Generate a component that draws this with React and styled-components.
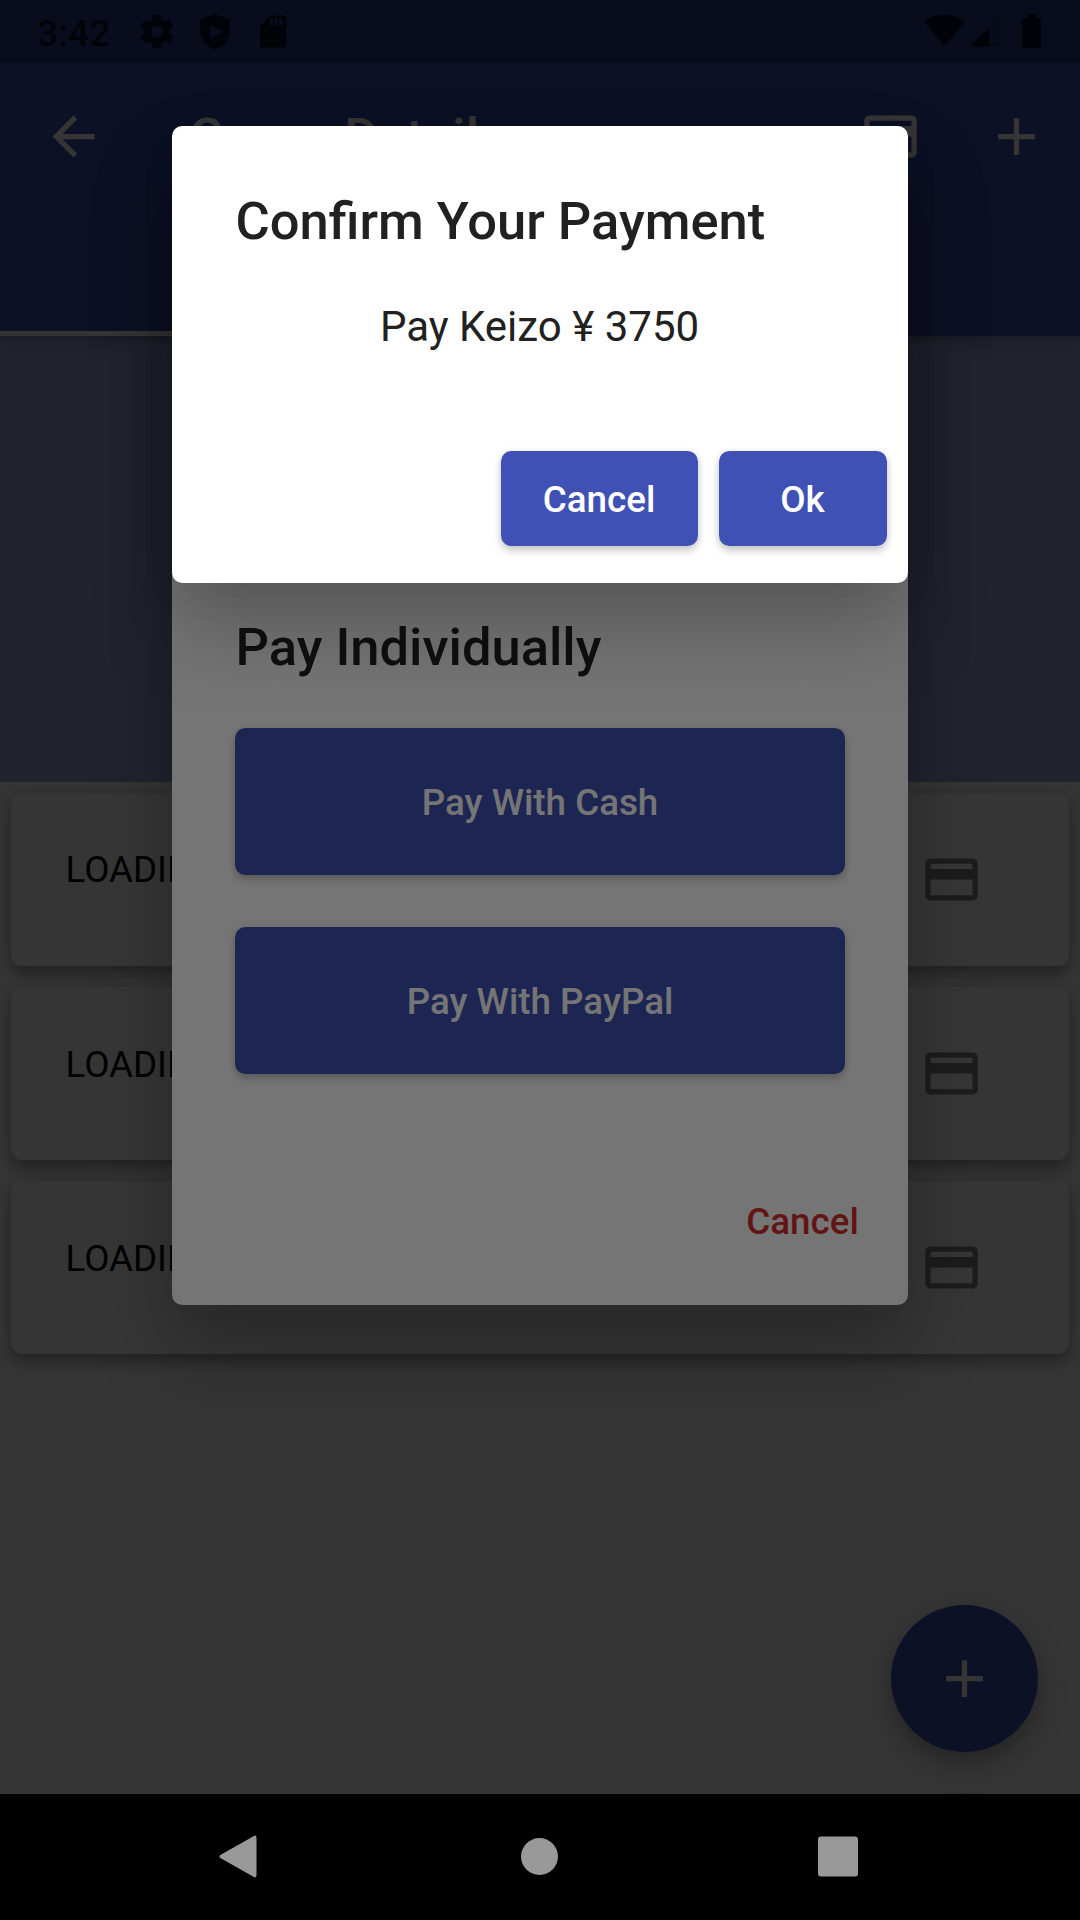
import React from "react";
import styled, { createGlobalStyle, css } from "styled-components";

const Global = createGlobalStyle`
  *, *::before, *::after { box-sizing: border-box; }
  body { margin: 0; background: #000; }
  button { font: inherit; border: 0; margin: 0; padding: 0; background: none; color: inherit; }
`;

const Device = styled.div`
  width: 1080px;
  height: 1920px;
  display: flex;
  flex-direction: column;
  overflow: hidden;
  font-family: Roboto, "Noto Sans", sans-serif;
  background: #000;
`;

const Screen = styled.div`
  position: relative;
  flex: 1;
  display: flex;
  flex-direction: column;
  overflow: hidden;
  background: #fafafa;
`;

const Header = styled.header`
  position: relative;
  z-index: 1;
  height: 336px;
  flex: none;
  display: flex;
  flex-direction: column;
  background: #3f51b5;
  box-shadow: 0 5px 12px rgba(0, 0, 0, 0.16), 0 8px 14px rgba(0, 0, 0, 0.06);
`;

const StatusBar = styled.div`
  height: 63px;
  display: flex;
  align-items: center;
  background: rgba(0, 0, 0, 0.25);
  color: rgba(0, 0, 0, 0.7);
`;

const Clock = styled.span`
  width: 141px;
  padding: 3px 0 0 37px;
  font-size: 37.3px;
  font-weight: 500;
  line-height: 44px;
  white-space: nowrap;
`;

const StatusIcons = styled.svg`
  display: block;
  margin-left: ${(p) => (p.$end ? "auto" : 0)};
`;

const Toolbar = styled.div`
  height: 147px;
  display: flex;
  align-items: center;
  padding-right: 0.5px;
  color: #fff;
`;

const IconButton = styled.button`
  width: ${(p) => p.$width || 126}px;
  height: 126px;
  flex: none;
  display: flex;
  align-items: center;
  justify-content: center;
  color: ${(p) => p.$color || "#fff"};
`;

const Icon = styled.svg`
  width: 63px;
  height: 63px;
  display: block;
  fill: currentColor;
`;

const ToolbarTitle = styled.h1`
  flex: 1;
  margin: 0;
  padding: 1px 0 0 42px;
  font-size: 52.5px;
  font-weight: 500;
  line-height: 62px;
`;

const Tabs = styled.div`
  flex: 1;
  display: flex;
`;

const Tab = styled.div`
  flex: 1;
  border-bottom: 5.25px solid ${(p) => (p.$active ? "#fff" : "transparent")};
`;

const Banner = styled.section`
  height: 446px;
  flex: none;
  background: #9fa8da;
`;

const List = styled.section`
  display: flex;
  flex-direction: column;
  gap: 21px;
  padding: 10.5px 11px;
`;

const Card = styled.article`
  height: 173.25px;
  display: flex;
  align-items: center;
  justify-content: space-between;
  padding: 0 55px 0 54.5px;
  border-radius: 10.5px;
  background: #fff;
  color: #000;
  box-shadow: 0 8px 14px rgba(0, 0, 0, 0.26), 0 3px 20px rgba(0, 0, 0, 0.16);
`;

const CardText = styled.span`
  margin-bottom: 18.5px;
  font-size: 36.75px;
  line-height: 43px;
`;

const Fab = styled.button`
  position: absolute;
  right: 42px;
  bottom: 42px;
  width: 147px;
  height: 147px;
  display: flex;
  align-items: center;
  justify-content: center;
  border-radius: 50%;
  background: #3f51b5;
  color: #fff;
  box-shadow: 0 10px 18px -2px rgba(0, 0, 0, 0.16), 0 14px 32px rgba(0, 0, 0, 0.14),
    0 3px 40px rgba(0, 0, 0, 0.06);
`;

const Scrim = styled.div`
  position: absolute;
  z-index: 2;
  inset: 0;
  display: flex;
  align-items: flex-start;
  justify-content: center;
  padding-top: 126px;
  background: rgba(0, 0, 0, 0.54);
`;

const Dialog = styled.div`
  width: 736px;
  height: ${(p) => p.$height}px;
  display: flex;
  flex-direction: column;
  border-radius: 10.5px;
  background: #fff;
  color: #212121;
  box-shadow: 0 46px 84px rgba(0, 0, 0, 0.24), 0 14px 40px rgba(0, 0, 0, 0.04);
`;

const DialogTitle = styled.h2`
  margin: 0;
  padding: ${(p) => p.$top}px 63.5px 0;
  font-size: 52.5px;
  font-weight: 500;
  line-height: 62px;
  white-space: nowrap;
`;

const DialogText = styled.p`
  margin: 0;
  padding: 50px 1px 0 0;
  font-size: 42px;
  line-height: 50px;
  text-align: center;
`;

const raised = css`
  border-radius: 10.5px;
  background: #3f51b5;
  color: #fff;
  box-shadow: 0 5px 8px rgba(0, 0, 0, 0.18), 0 1px 7px rgba(0, 0, 0, 0.1);
`;

const Button = styled.button`
  height: ${(p) => p.$height || 94.5}px;
  width: ${(p) => p.$width}px;
  flex: none;
  display: flex;
  align-items: center;
  justify-content: center;
  padding-top: 2px;
  font-size: 36.75px;
  font-weight: 500;
  line-height: 43px;
  ${(p) => (p.$flat ? "color: #d32f2f;" : raised)}
`;

const Choices = styled.div`
  display: flex;
  flex-direction: column;
  gap: 52px;
  padding: 50px 63px 0;
`;

const Actions = styled.div`
  display: flex;
  justify-content: flex-end;
  gap: 21px;
  margin-top: auto;
  padding: 0 21.5px ${(p) => p.$bottom}px;
`;

const NavBar = styled.nav`
  height: 126px;
  flex: none;
  display: flex;
  align-items: center;
  justify-content: center;
  gap: 236px;
  background: #000;
  fill: #999;
`;

const NavIcon = styled.svg`
  width: 63px;
  height: 63px;
  display: block;
`;

const AddIcon = () => (
  <Icon viewBox="0 0 24 24">
    <path d="M19 13h-6v6h-2v-6H5v-2h6V5h2v6h6v2z" />
  </Icon>
);

const CardIcon = () => (
  <Icon viewBox="0 0 24 24">
    <path d="M20 4H4c-1.11 0-1.99.89-1.99 2L2 18c0 1.11.89 2 2 2h16c1.11 0 2-.89 2-2V6c0-1.11-.89-2-2-2zm0 14H4v-6h16v6zm0-10H4V6h16v2z" />
  </Icon>
);

const BackIcon = () => (
  <Icon viewBox="0 0 24 24">
    <path d="M20 11H7.83l5.59-5.59L12 4l-8 8 8 8 1.41-1.41L7.83 13H20v-2z" />
  </Icon>
);

const GEAR =
  "M19.43 12.98c.04-.32.07-.64.07-.98s-.03-.66-.07-.98l2.11-1.65c.19-.15.24-.42.12-.64l-2-3.46c-.12-.22-.39-.3-.61-.22l-2.49 1c-.52-.4-1.08-.73-1.69-.98l-.38-2.65C14.46 2.18 14.25 2 14 2h-4c-.25 0-.46.18-.49.42l-.38 2.65c-.61.25-1.17.59-1.69.98l-2.49-1c-.23-.09-.49 0-.61.22l-2 3.46c-.13.22-.07.49.12.64l2.11 1.65c-.04.32-.07.65-.07.98s.03.66.07.98l-2.11 1.65c-.19.15-.24.42-.12.64l2 3.46c.12.22.39.3.61.22l2.49-1c.52.4 1.08.73 1.69.98l.38 2.65c.03.24.24.42.49.42h4c.25 0 .46-.18.49-.42l.38-2.65c.61-.25 1.17-.59 1.69-.98l2.49 1c.23.09.49 0 .61-.22l2-3.46c.12-.22.07-.49-.12-.64l-2.11-1.65zM12 15.5c-1.93 0-3.5-1.57-3.5-3.5s1.57-3.5 3.5-3.5 3.5 1.57 3.5 3.5-1.57 3.5-3.5 3.5z";

const LeftStatusIcons = () => (
  <StatusIcons width="150" height="63" fill="currentColor">
    <path transform="translate(-3.9 11.6) scale(1.66)" d={GEAR} />
    <path
      fillRule="evenodd"
      d="M74 14L88.8 19.6V31C88.8 40 82.5 47 74 49.2C65.500 47 59.200 40 59.200 31V19.600ZM69 24.800V38.400L82.700 31.600Z"
    />
    <path
      fillRule="evenodd"
      d="M129.500 15.500H142.500A3 3 0 0 1 145.500 18.500V44.800A3 3 0 0 1 142.500 47.800H122A3 3 0 0 1 119 44.800V26.200ZM129 18.500V25.500H132V18.500ZM133.700 18.500V25.500H136.700V18.500ZM138.400 18.500V25.500H141.400V18.500Z"
    />
  </StatusIcons>
);

const RightStatusIcons = () => (
  <StatusIcons $end width="160" height="63" fill="currentColor">
    <path d="M4.700 22.500C3.900 21.600 4.100 20.800 5.200 20.200C15 13.100 34 13.100 43.700 20.200C44.800 20.800 45 21.600 44.200 22.500L26.500 43.800Q24.500 46.200 22.500 43.800Z" />
    <path opacity="0.25" d="M69 27L79.500 16.600Q81.800 14.800 81.800 17.500V45Q81.800 46.800 80 46.800H69Z" />
    <path d="M69 27V46.800H52.600Q50 46.600 51.700 44.400Z" />
    <path d="M107.300 14H116V18H118.900Q121 18 121 20V46Q121 48 118.900 48H104Q102 48 102 46V20Q102 18 104 18H107.300Z" />
  </StatusIcons>
);

const rows = [1, 2, 3];

export default function App() {
  return (
    <Device>
      <Global />
      <Screen>
        <Header>
          <StatusBar>
            <Clock>3:42</Clock>
            <LeftStatusIcons />
            <RightStatusIcons />
          </StatusBar>
          <Toolbar>
            <IconButton $width={147} aria-label="Back">
              <BackIcon />
            </IconButton>
            <ToolbarTitle>Group Details</ToolbarTitle>
            <IconButton aria-label="Pay">
              <CardIcon />
            </IconButton>
            <IconButton aria-label="Add">
              <AddIcon />
            </IconButton>
          </Toolbar>
          <Tabs>
            <Tab $active />
            <Tab />
          </Tabs>
        </Header>
        <Banner />
        <List>
          {rows.map((id) => (
            <Card key={id}>
              <CardText>LOADING</CardText>
              <IconButton $color="#858585" aria-label="Pay">
                <CardIcon />
              </IconButton>
            </Card>
          ))}
        </List>
        <Fab aria-label="Add payment">
          <AddIcon />
        </Fab>
        <Scrim>
          <Dialog $height={1179}>
            <DialogTitle $top={490}>Pay Individually</DialogTitle>
            <Choices>
              <Button $height={147}>Pay With Cash</Button>
              <Button $height={147}>Pay With PayPal</Button>
            </Choices>
            <Actions $bottom={37}>
              <Button $flat $width={168}>
                Cancel
              </Button>
            </Actions>
          </Dialog>
        </Scrim>
        <Scrim>
          <Dialog $height={456.5}>
            <DialogTitle $top={64}>Confirm Your Payment</DialogTitle>
            <DialogText>Pay Keizo ¥ 3750</DialogText>
            <Actions $bottom={37}>
              <Button $width={197}>Cancel</Button>
              <Button $width={168}>Ok</Button>
            </Actions>
          </Dialog>
        </Scrim>
      </Screen>
      <NavBar>
        <NavIcon viewBox="0 0 63 63">
          <path d="M46.500 11.400V49.600Q46 52.500 43.500 50.800L10.300 32Q8.500 30.500 10.300 29L43.500 10.200Q46 8.500 46.500 11.400Z" />
        </NavIcon>
        <NavIcon viewBox="0 0 63 63">
          <circle cx="30.500" cy="30.500" r="18.500" />
        </NavIcon>
        <NavIcon viewBox="0 0 63 63">
          <rect x="10" y="10.500" width="40" height="40" rx="3" />
        </NavIcon>
      </NavBar>
    </Device>
  );
}
